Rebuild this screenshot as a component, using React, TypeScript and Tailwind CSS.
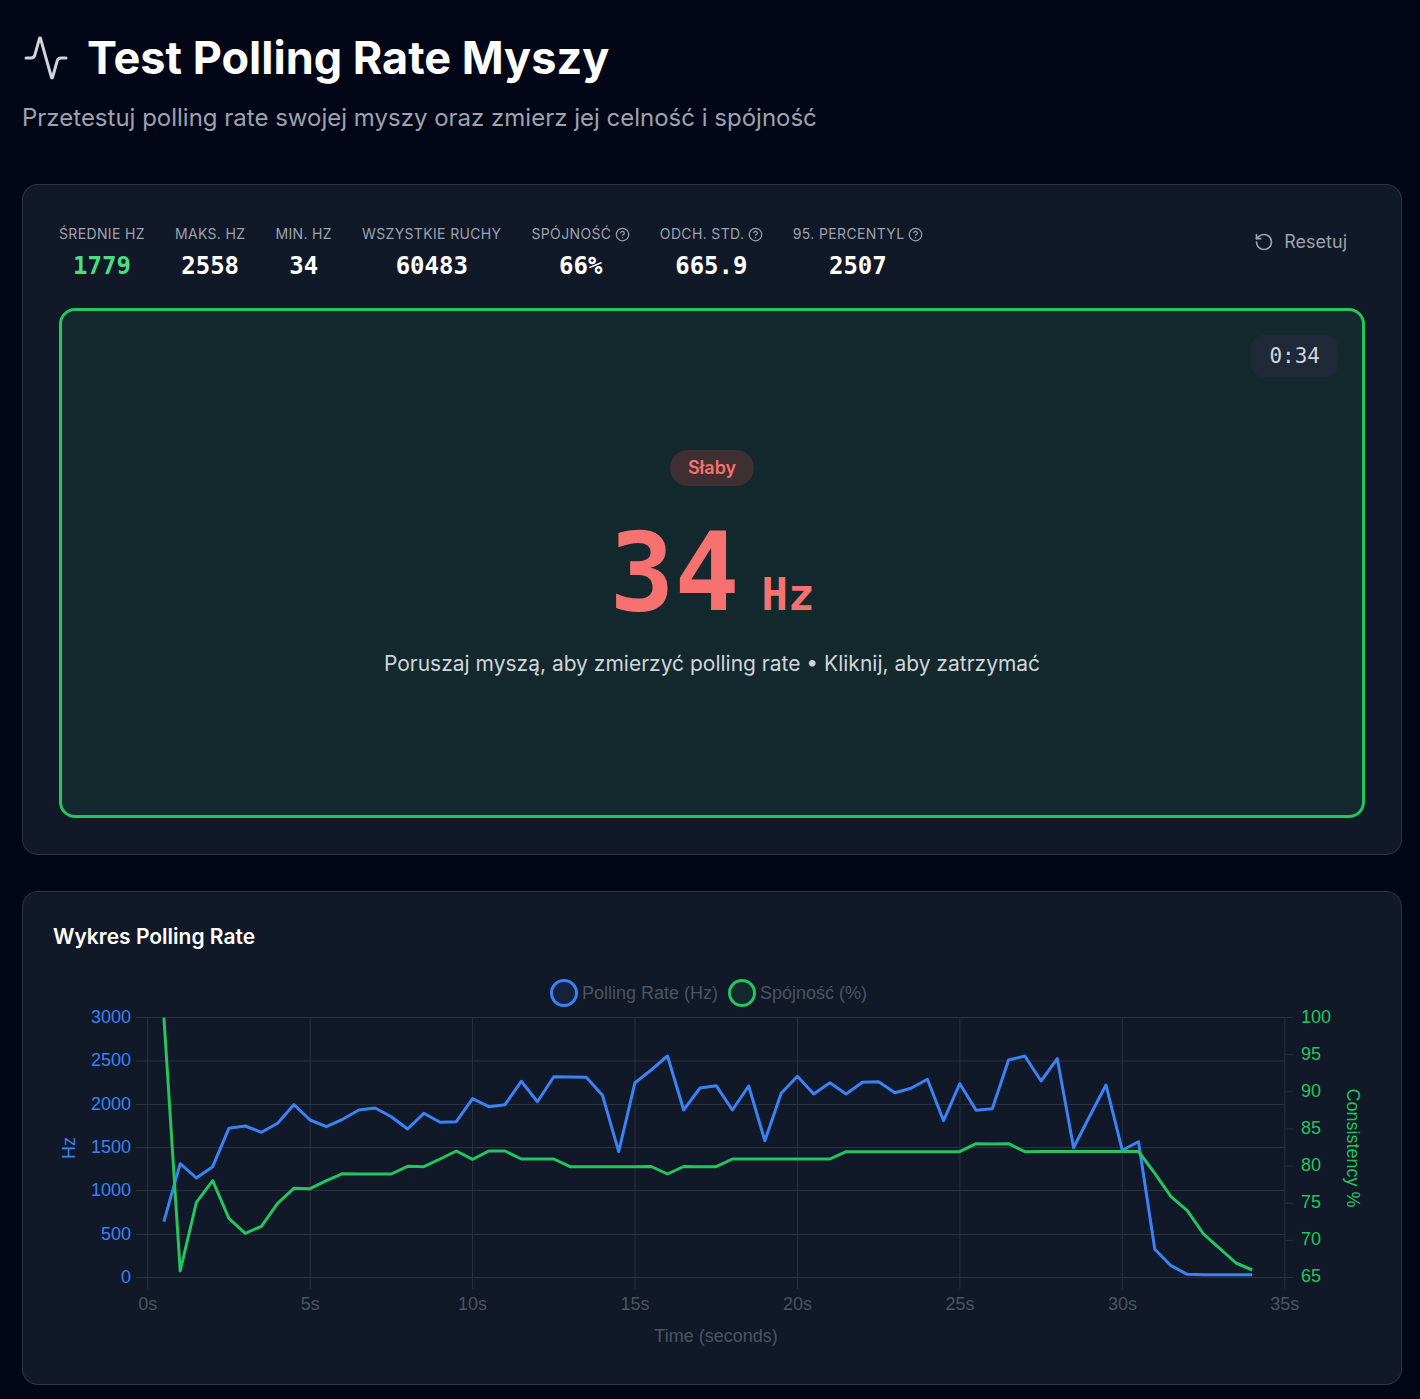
import { Activity, CircleHelp, RotateCcw } from "lucide-react";

const hzLine = [
  1221.7, 1163.7, 1178, 1166.7, 1128.3, 1126, 1132.3, 1123.3, 1104.7, 1120, 1126.7, 1119.3, 1110, 1108, 1116.7, 1129,
  1113.3, 1122.3, 1121.7, 1098.7, 1106.7, 1104.7, 1081.3, 1101.7, 1076.7, 1077, 1077.3, 1095.3, 1151.7, 1082.7, 1070,
  1056, 1110, 1088, 1085.7, 1110, 1086, 1140.7, 1093.3, 1076.3, 1094, 1082.7, 1094, 1082.3, 1081.7, 1092.7, 1088.3,
  1079.3, 1120.7, 1083.7, 1110.3, 1108.7, 1060, 1056, 1081, 1058.7, 1147.7, 1116, 1085, 1150.3, 1141.7, 1249.3, 1265.7,
  1274.3, 1274.7, 1274.7, 1274.7, 1274.7,
];

const consistencyLine = [
  1017.7, 1271, 1202.3, 1180.7, 1218.3, 1233.3, 1226.3, 1203.3, 1188.3, 1188.7, 1180.7, 1173.7, 1174, 1174, 1174, 1166.3,
  1166.7, 1159, 1151, 1159.3, 1151, 1151, 1159, 1159, 1159, 1166.7, 1166.7, 1166.7, 1166.7, 1166.7, 1166.5, 1174, 1166.5,
  1166.7, 1166.7, 1159, 1159, 1159, 1159, 1159, 1159, 1159, 1151.7, 1151.7, 1151.7, 1151.7, 1151.7, 1151.7, 1151.7,
  1151.7, 1143.7, 1144, 1143.7, 1151.7, 1151.5, 1151.5, 1151.5, 1151.5, 1151.5, 1151.5, 1151.5, 1173.3, 1196.7, 1210.7,
  1234, 1248.3, 1263, 1270,
];

const stats = [
  { label: "Średnie Hz", value: "1779", green: true },
  { label: "Maks. Hz", value: "2558" },
  { label: "Min. Hz", value: "34" },
  { label: "Wszystkie ruchy", value: "60483" },
  { label: "Spójność", value: "66%", help: true },
  { label: "Odch. std.", value: "665.9", help: true },
  { label: "95. percentyl", value: "2507", help: true },
];

const xFor = (i: number) => 147.7 + (i + 1) * 16.243;
const toPoints = (line: number[]) => line.map((y, i) => `${xFor(i).toFixed(1)},${y}`).join(" ");

const Chart = () => {
  const hzTicks = ["3000", "2500", "2000", "1500", "1000", "500", "0"];
  const hzY = [1017.5, 1061, 1104.5, 1147.5, 1190.5, 1234.5, 1277.5];
  const rightTicks = ["100", "95", "90", "85", "80", "75", "70", "65"];
  const seconds = [0, 5, 10, 15, 20, 25, 30, 35];
  return (
    <svg viewBox="53 975 1318 379" width={1318} height={379} className="block" fontFamily="'Liberation Sans', Arial, sans-serif" fontSize={18}>
      {/* grid */}
      {hzY.map((y) => (
        <line key={y} x1={136} x2={1285} y1={y} y2={y} stroke="#2a3140" strokeWidth={1} />
      ))}
      {seconds.map((s) => (
        <line key={s} x1={147.7 + s * 32.49} x2={147.7 + s * 32.49} y1={1017.5} y2={1289} stroke="#2a3140" strokeWidth={1} />
      ))}
      {rightTicks.map((t, i) => (
        <line key={t} x1={1285} x2={1293} y1={1017.5 + i * 37.14} y2={1017.5 + i * 37.14} stroke="#2a3140" strokeWidth={1} />
      ))}

      {/* legend */}
      <circle cx={564} cy={993} r={12.5} fill="#3b82f61a" stroke="#3b82f6" strokeWidth={3} />
      <text x={582} y={999} fill="#4b5563">Polling Rate (Hz)</text>
      <circle cx={742} cy={993} r={12.5} fill="#22c55e1a" stroke="#22c55e" strokeWidth={3} />
      <text x={760} y={999} fill="#4b5563">Spójność (%)</text>

      {/* axes labels */}
      {hzTicks.map((t, i) => (
        <text key={t} x={131} y={hzY[i] + 5} textAnchor="end" fill="#3b82f6">{t}</text>
      ))}
      {rightTicks.map((t, i) => (
        <text key={t} x={1301} y={1017.5 + i * 37.14 + 5} fill="#22c55e">{t}</text>
      ))}
      {seconds.map((s) => (
        <text key={s} x={147.7 + s * 32.49} y={1310} textAnchor="middle" fill="#4b5563">{s}s</text>
      ))}
      <text x={716} y={1342} textAnchor="middle" fill="#4b5563">Time (seconds)</text>
      <text transform="translate(75 1148) rotate(-90)" textAnchor="middle" fill="#3b82f6">Hz</text>
      <text transform="translate(1347 1148) rotate(90)" textAnchor="middle" fill="#22c55e">Consistency %</text>

      {/* data */}
      <polyline points={toPoints(hzLine)} fill="none" stroke="#3b82f6" strokeWidth={3} strokeLinejoin="round" />
      <polyline points={toPoints(consistencyLine)} fill="none" stroke="#22c55e" strokeWidth={3} strokeLinejoin="round" />
    </svg>
  );
};

export default function App() {
  return (
    <div className="min-h-[1399px] bg-[#020617] pr-[18px] pb-[14px] pl-[22px] font-['Inter',sans-serif]">
      <header className="pt-[28px]">
        <h1 className="flex items-center gap-[17px] text-[45px] leading-[60px] font-bold text-white">
          <Activity size={48} strokeWidth={1.5} className="text-[#d1d5db]" />
          Test Polling Rate Myszy
        </h1>
        <p className="mt-[14px] text-2xl leading-[32px] text-[#9ca3af]">
          Przetestuj polling rate swojej myszy oraz zmierz jej celność i spójność
        </p>
      </header>

      <section className="mt-[50px] rounded-2xl border border-[#374151]/70 bg-[#111827] p-9">
        <div className="flex items-start justify-between">
          <div className="mt-px flex gap-[30px]">
            {stats.map((s) => (
              <div key={s.label} className="flex flex-col items-center">
                <div className="flex h-6 items-center gap-[3.5px] text-sm tracking-wide text-[#9ca3af] uppercase">
                  {s.label}
                  {s.help && <CircleHelp size={15} />}
                </div>
                <div
                  className={`mt-1 font-['DejaVu_Sans_Mono',monospace] text-2xl leading-8 font-bold ${
                    s.green ? "text-[#4ade80]" : "text-white"
                  }`}
                >
                  {s.value}
                </div>
              </div>
            ))}
          </div>
          <button className="mt-[9px] mr-[18px] flex items-center gap-[10px] text-lg leading-6 text-[#9ca3af]">
            <RotateCcw size={20} />
            Resetuj
          </button>
        </div>

        <div className="relative mt-[26px] flex h-[510px] flex-col items-center justify-center rounded-2xl border-[3px] border-[#22c55e] bg-[#13292d] pt-[3px]">
          <div className="absolute top-6 right-6 rounded-xl bg-[#1f2937] px-[18px] py-[7px] font-['DejaVu_Sans_Mono',monospace] text-[21px] leading-7 text-[#d1d5db]">
            0:34
          </div>
          <div className="rounded-full bg-[#ef4444]/20 px-[18px] py-[6px] text-lg leading-6 font-semibold text-[#f87171]">
            Słaby
          </div>
          <div className="mt-[27px] flex items-baseline gap-[22px] font-['DejaVu_Sans_Mono',monospace] font-bold text-[#f87171]">
            <span className="text-[108px] leading-[120px]">34</span>
            <span className="text-[44px] leading-[48px]">Hz</span>
          </div>
          <p className="mt-[15px] text-[21px] leading-8 text-[#d1d5db]">
            Poruszaj myszą, aby zmierzyć polling rate • Kliknij, aby zatrzymać
          </p>
        </div>
      </section>

      <section className="mt-[36px] rounded-2xl border border-[#374151]/70 bg-[#111827] p-[30px]">
        <h2 className="mb-[24px] text-[21px] leading-[29px] font-semibold text-white">Wykres Polling Rate</h2>
        <Chart />
      </section>
    </div>
  );
}
